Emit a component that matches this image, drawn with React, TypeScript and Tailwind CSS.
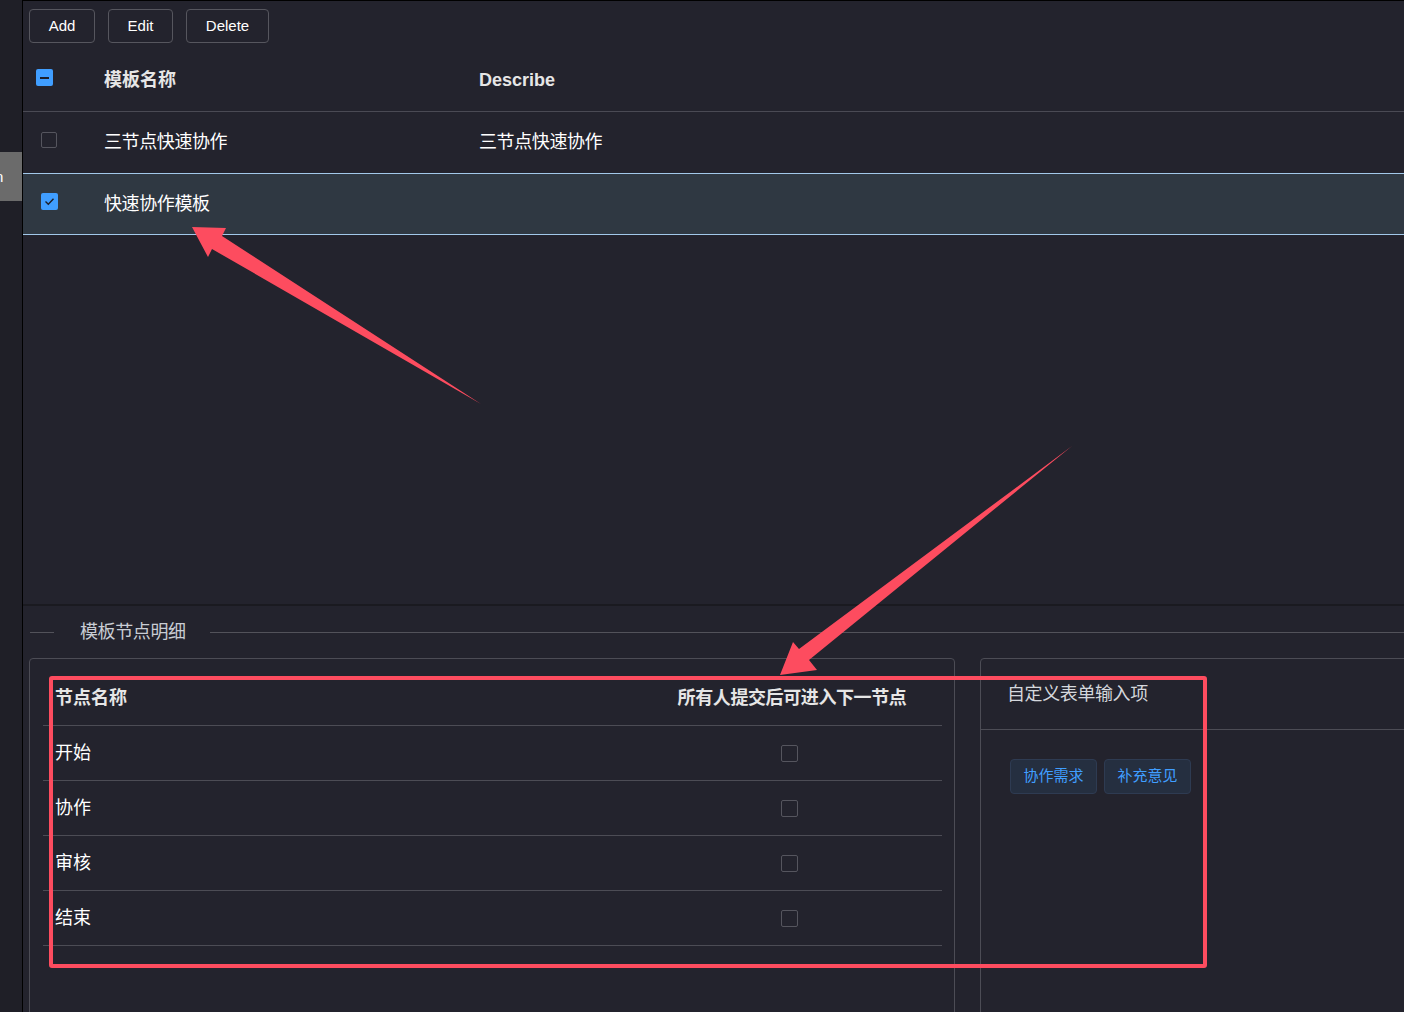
import React from "react";

const FONT = "font-['Liberation_Sans','Noto_Sans_CJK_SC',sans-serif]";

function Unchecked() {
  return <div className="w-[16px] h-[16px] rounded-[2px] border border-[#55555e] bg-transparent" />;
}

function CheckedBox() {
  return (
    <div className="w-[17px] h-[17px] rounded-[2px] bg-[#409eff] flex items-center justify-center">
      <svg width="11" height="9" viewBox="0 0 11 9">
        <path d="M1.5 4.5 L4.3 7.2 L9.5 1.8" fill="none" stroke="#1d1e27" strokeWidth="1.4" />
      </svg>
    </div>
  );
}

function Indeterminate() {
  return (
    <div className="w-[17px] h-[17px] rounded-[2px] bg-[#409eff] flex items-center justify-center">
      <div className="w-[9px] h-[2px] bg-[#1d1e27]" />
    </div>
  );
}

const nodes = ["开始", "协作", "审核", "结束"];

export default function App() {
  return (
    <div className={`relative w-[1404px] h-[1012px] overflow-hidden flex bg-[#23232d] ${FONT}`}>
      {/* left strip */}
      <div className="w-[23px] shrink-0 bg-[#1f1f27] border-r border-black flex flex-col">
        <div className="mt-[152px] h-[49px] shrink-0 bg-[#6b6b6b] overflow-hidden flex items-center">
          <span className="text-white text-[15px] ml-[-5px] leading-none">n</span>
        </div>
      </div>

      {/* main */}
      <div className="flex-1 flex flex-col border-t border-black min-w-0 overflow-hidden">
        {/* toolbar */}
        <div className="shrink-0 flex gap-[13px] pt-[8px] pl-[6px]">
          <button className="w-[66px] h-[34px] rounded-[4px] border border-[#56565e] text-white text-[15px] bg-transparent">Add</button>
          <button className="w-[65px] h-[34px] rounded-[4px] border border-[#56565e] text-white text-[15px] bg-transparent">Edit</button>
          <button className="w-[83px] h-[34px] rounded-[4px] border border-[#56565e] text-white text-[15px] bg-transparent">Delete</button>
        </div>

        {/* table */}
        <div className="shrink-0 mt-[7px] flex flex-col">
          <div className="h-[62px] flex items-center border-b border-[#4a4a54]">
            <div className="w-[81px] pl-[13px] mb-[6px]">
              <Indeterminate />
            </div>
            <div className="w-[375px] text-[18px] font-bold text-[#e6e6e6]">模板名称</div>
            <div className="text-[18px] font-bold text-[#e6e6e6]">Describe</div>
          </div>
          <div className="h-[61px] flex items-center">
            <div className="w-[81px] pl-[18px] mb-[5px]">
              <Unchecked />
            </div>
            <div className="w-[375px] text-[18px] text-white tracking-[-0.4px]">三节点快速协作</div>
            <div className="text-[18px] text-white tracking-[-0.4px]">三节点快速协作</div>
          </div>
          <div className="h-[62px] flex items-center bg-[#2f3842] border-t border-b border-[#a2c8ea]">
            <div className="w-[81px] pl-[18px] mb-[5px]">
              <CheckedBox />
            </div>
            <div className="w-[375px] text-[18px] text-white tracking-[-0.4px]">快速协作模板</div>
            <div className="text-[18px] text-white"></div>
          </div>
        </div>

        {/* empty space */}
        <div className="shrink-0 h-[369px]" />
        <div className="shrink-0 h-[2px] bg-[#1a1a20]" />

        {/* divider with label */}
        <div className="shrink-0 h-[52px] flex items-center pl-[7px]">
          <div className="w-[24px] h-px bg-[#52525a]" />
          <span className="ml-[26px] mr-[24px] text-[18px] text-[#c9cdd4] tracking-[-0.4px]">模板节点明细</span>
          <div className="flex-1 h-px bg-[#52525a]" />
        </div>

        {/* cards */}
        <div className="shrink-0 flex pl-[6px] gap-[25px]">
          <div className="w-[926px] h-[400px] shrink-0 rounded-t-[4px] border border-[#4c4c55] pt-[12px] pl-[13px] pr-[12px]">
            <div className="h-[55px] flex items-center border-b border-[#4c4c55]">
              <div className="flex-1 pl-[12px] text-[18px] font-bold text-[#e6e6e6]">节点名称</div>
              <div className="w-[300px] text-center text-[18px] font-bold text-[#e6e6e6] tracking-[-0.4px]">所有人提交后可进入下一节点</div>
            </div>
            {nodes.map((n) => (
              <div key={n} className="h-[55px] flex items-center border-b border-[#4c4c55]">
                <div className="flex-1 pl-[12px] text-[18px] text-white">{n}</div>
                <div className="w-[300px] flex justify-center pr-[6px]">
                  <div className="w-[17px] h-[17px] rounded-[2px] border border-[#55555e]" />
                </div>
              </div>
            ))}
          </div>
          <div className="w-[440px] h-[400px] shrink-0 rounded-t-[4px] border border-[#4c4c55]">
            <div className="h-[71px] flex items-center pl-[26px] border-b border-[#4c4c55] text-[18px] text-[#d4d7dc] tracking-[-0.4px]">
              自定义表单输入项
            </div>
            <div className="pt-[29px] pl-[29px] flex gap-[7px]">
              <span className="w-[87px] h-[35px] rounded-[4px] bg-[#252f40] border border-[#2e3b52] text-[#409eff] text-[15px] flex items-center justify-center">协作需求</span>
              <span className="w-[87px] h-[35px] rounded-[4px] bg-[#252f40] border border-[#2e3b52] text-[#409eff] text-[15px] flex items-center justify-center">补充意见</span>
            </div>
          </div>
        </div>
      </div>

      {/* annotation: red rectangle */}
      <div className="absolute left-[49px] top-[676px] w-[1158px] h-[292px] border-[4px] border-[#fd4c5f] rounded-[3px] pointer-events-none" />

      {/* annotation: arrows */}
      <svg className="absolute left-0 top-0 pointer-events-none" width="1404" height="1012" viewBox="0 0 1404 1012">
        <polygon
          points="192,227 226,228 222,236 481,404 212,249 208,257"
          fill="#fd4c5f"
        />
        <polygon
          points="780,675 793,642 799,649 1072,446 809,660 817,670"
          fill="#fd4c5f"
        />
      </svg>
    </div>
  );
}
